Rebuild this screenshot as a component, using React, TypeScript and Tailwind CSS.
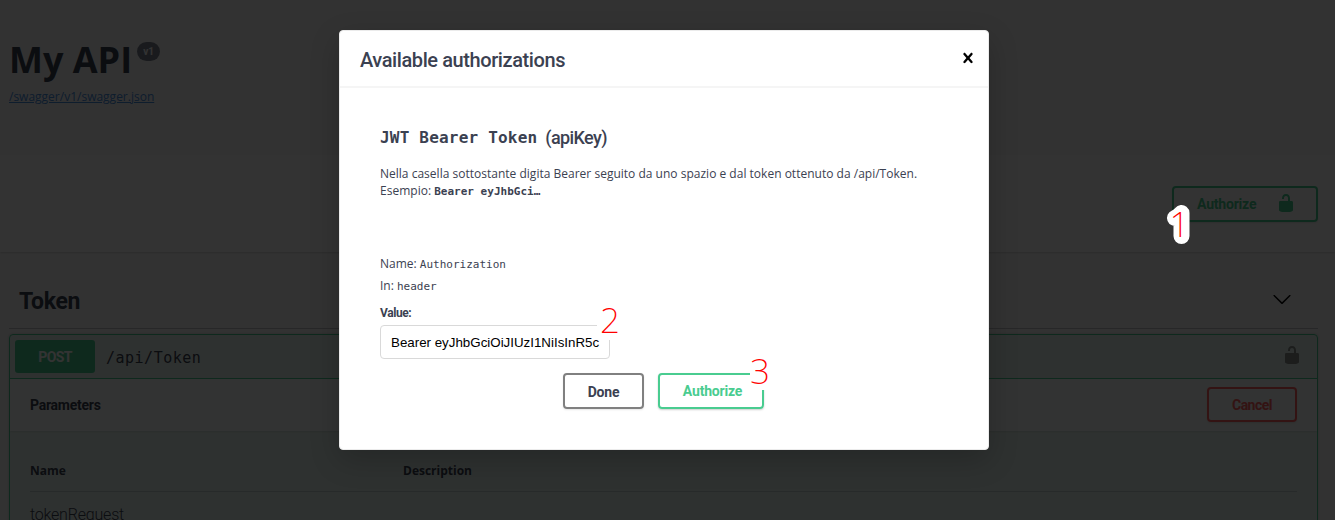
import React from "react";

const UI = "font-['Roboto','Open_Sans',sans-serif]";
const MONO = "font-['DejaVu_Sans_Mono',monospace]";

function Lock({ className }: { className: string }) {
  return (
    <svg viewBox="0 0 20 20" className={`h-5 w-5 ${className}`} fill="currentColor">
      <path d="M15.8 8H14V5.6C14 2.703 12.665 1 10 1 7.334 1 6 2.703 6 5.6V6h2v-.801C8 3.754 8.797 3 10 3c1.203 0 2 .754 2 2.199V8H4c-.553 0-1 .646-1 1.199V17c0 .549.428 1.139.951 1.307l1.197.387C5.672 18.861 6.55 19 7.1 19h5.8c.549 0 1.428-.139 1.951-.307l1.196-.387c.524-.167.953-.757.953-1.306V9.199C17 8.646 16.352 8 15.8 8z" />
    </svg>
  );
}

function ApiPage() {
  return (
    <div className="flex h-[520px] flex-col bg-[#fafafa] text-[#3b4151]">
      <header className="h-[155px] shrink-0 pl-[9px] pt-[35px]">
        <div className="flex h-[49px] items-start">
          <h1 className="font-['Open_Sans',sans-serif] text-[36px] font-bold leading-[49px]">My API</h1>
          <span className={`${UI} ml-[5px] mt-[7px] flex h-[19px] w-[23px] items-center justify-center rounded-full bg-[#7d8492] text-[10px] font-bold text-white`}>
            v1
          </span>
        </div>
        <a className="mt-[4px] block w-fit font-['Open_Sans',sans-serif] text-[12px] leading-[18px] text-[#4990e2] underline">
          /swagger/v1/swagger.json
        </a>
      </header>
      <div className="flex h-[97px] shrink-0 items-start justify-end bg-white pr-[17px] pt-[31px] shadow-[0_1px_2px_rgba(0,0,0,0.15)]">
        <button className={`${UI} flex h-[36px] w-[146px] items-center justify-between rounded border-2 border-[#49cc90] pl-[23px] pr-[20px] text-[14px] font-bold text-[#49cc90] shadow-[0_1px_2px_rgba(0,0,0,0.1)]`}>
          <span className="tracking-[-0.2px]">Authorize</span>
          <Lock className="mb-[2px]" />
        </button>
      </div>
      <main className="flex min-h-0 flex-1 flex-col overflow-hidden pl-[9px] pr-[17px] pt-[20px]">
        <div className="flex h-[57px] shrink-0 items-center justify-between border-b border-[#3b4151]/30 pl-[10px] pr-[26px]">
          <h2 className={`${UI} pt-[4px] text-[23px] font-bold tracking-[-0.3px]`}>Token</h2>
          <svg viewBox="0 0 20 20" className="mb-[3px] h-5 w-5 text-black" fill="currentColor">
            <path d="M17.418 6.109c.272-.268.709-.268.979 0s.271.701 0 .969l-7.908 7.83c-.27.268-.707.268-.979 0l-7.908-7.83c-.27-.268-.27-.701 0-.969.271-.268.709-.268.979 0L10 13.25l7.418-7.141z" />
          </svg>
        </div>
        <section className="mt-[5px] flex h-[260px] shrink-0 flex-col rounded border border-[#49cc90] bg-[#49cc90]/10 shadow-[0_0_3px_rgba(0,0,0,0.19)]">
          <div className="flex h-[44px] shrink-0 items-center border-b border-[#49cc90] pl-[5px] pr-[15px]">
            <span className={`${UI} flex h-[33px] w-[80px] items-center justify-center rounded-[3px] bg-[#49cc90] pt-[2px] text-[14px] font-bold tracking-[-0.6px] text-white`}>
              POST
            </span>
            <span className={`${MONO} ml-[11px] pt-[3px] text-[15px] tracking-[0.5px]`}>/api/Token</span>
            <Lock className="mb-[3px] ml-auto text-black opacity-40" />
          </div>
          <div className="flex h-[52px] shrink-0 items-center justify-between bg-white/80 pl-[20px] pr-[20px] shadow-[0_1px_2px_rgba(0,0,0,0.1)]">
            <h4 className={`${UI} pt-px text-[14px] font-bold tracking-[-0.25px]`}>Parameters</h4>
            <button className={`${UI} mb-px flex h-[35px] w-[90px] items-center justify-center rounded border-2 border-[#ff6060] pt-px text-[14px] font-bold tracking-[-0.5px] text-[#ff6060] shadow-[0_1px_2px_rgba(0,0,0,0.1)]`}>
              Cancel
            </button>
          </div>
          <div className="px-[20px] pt-[20px]">
            <div className="flex h-[41px] items-center border-b border-[#3b4151]/20 font-['Open_Sans',sans-serif] text-[12px] font-bold">
              <span className="w-[373px]">Name</span>
              <span>Description</span>
            </div>
            <div className={`${UI} pt-[11px] text-[16px] font-light leading-[24px] tracking-[-0.2px]`}>tokenRequest</div>
          </div>
        </section>
      </main>
    </div>
  );
}

function AuthDialog() {
  return (
    <div className="absolute left-[339px] top-[30px] flex h-[420px] w-[650px] flex-col rounded border border-[#ebebeb] bg-white text-[#3b4151] shadow-[0_10px_30px_rgba(0,0,0,0.2)]">
      <div className="flex h-[57px] shrink-0 items-center justify-between border-b-2 border-[#f5f5f5] pl-[20px] pr-[10px]">
        <h3 className={`${UI} pt-[3px] text-[20px] font-medium tracking-[-0.41px]`}>Available authorizations</h3>
        <svg viewBox="0 0 20 20" className="mb-[2px] h-5 w-5 text-black" fill="currentColor">
          <path d="M14.348 14.849c-.469.469-1.229.469-1.697 0L10 11.819l-2.651 3.029c-.469.469-1.229.469-1.697 0-.469-.469-.469-1.229 0-1.697l2.758-3.15-2.759-3.152c-.469-.469-.469-1.228 0-1.697.469-.469 1.228-.469 1.697 0L10 8.183l2.651-3.031c.469-.469 1.228-.469 1.697 0 .469.469.469 1.229 0 1.697l-2.758 3.152 2.758 3.15c.469.469.469 1.229 0 1.698z" />
        </svg>
      </div>
      <div className="flex flex-col px-[40px] pt-[37px] font-['Open_Sans',sans-serif] text-[12px]">
        <h4 className="flex h-[24px] items-center gap-[8px]">
          <span className={`${MONO} pt-[2px] text-[16px] font-bold tracking-[0.2px]`}>JWT Bearer Token</span>
          <span className={`${UI} text-[18px] font-medium tracking-[-0.6px]`}>(apiKey)</span>
        </h4>
        <p className="mt-[16px] whitespace-nowrap leading-[17px] tracking-[0.01px]">
          Nella casella sottostante digita Bearer seguito da uno spazio e dal token ottenuto da /api/Token.
          <br />
          Esempio: <b className={`${MONO} text-[11px]`}>Bearer eyJhbGci…</b>
        </p>
        <p className="mt-[55px] leading-[18px]">
          Name: <code className={`${MONO} text-[11px]`}>Authorization</code>
        </p>
        <p className="mt-[3px] leading-[18px]">
          In: <code className={`${MONO} text-[11px]`}>header</code>
        </p>
        <label className={`${UI} mt-[9px] text-[12px] font-bold leading-[16px] tracking-[-0.4px]`}>Value:</label>
        <div className="mt-[4px] flex h-[34px] w-[230px] items-center rounded border border-[#d9d9d9] pl-[10px] pt-px font-['Liberation_Sans',sans-serif] text-[13.33px] text-black">
          <span className="whitespace-nowrap">Bearer eyJhbGciOiJIUzI1NiIsInR5c</span>
        </div>
        <div className={`${UI} mt-[14px] flex gap-[14px] pl-[183px] text-[14px] font-bold`}>
          <button className="flex h-[36px] w-[81px] items-center justify-center rounded border-2 border-[#808080] pt-[2px] tracking-[-0.2px] shadow-[0_1px_2px_rgba(0,0,0,0.1)]">
            Done
          </button>
          <button className="flex h-[36px] w-[106px] items-center justify-center rounded border-2 border-[#49cc90] pl-[3px] tracking-[-0.2px] text-[#49cc90] shadow-[0_1px_2px_rgba(0,0,0,0.2)]">
            Authorize
          </button>
        </div>
      </div>
    </div>
  );
}

const DIGIT = "font-['Noto_Sans','Open_Sans',sans-serif] text-[35px] font-extralight";

export default function App() {
  return (
    <div className="relative h-[520px] w-full overflow-hidden">
      <ApiPage />
      <div className="absolute inset-0 bg-black/80" />
      <AuthDialog />
      <svg className="absolute left-[1155px] top-[195px] h-[60px] w-[50px]">
        <path d="M20 23C22.500 22 24.500 20.500 26.500 18V41" fill="none" stroke="#ffffff" strokeWidth="16" strokeLinejoin="round" strokeLinecap="round" />
        <text x="14.5" y="42" className={DIGIT} fill="#ff0000">
          1
        </text>
      </svg>
      <svg className="absolute left-[597px] top-[296px] h-[44px] w-[28px] overflow-visible bg-white">
        <text x="3" y="37" className={DIGIT} fill="#ff0000">2</text>
      </svg>
      <svg className="absolute left-[750px] top-[346px] h-[44px] w-[24px] overflow-visible bg-white">
        <text x="0" y="38" className={DIGIT} fill="#ff0000">3</text>
      </svg>
    </div>
  );
}
